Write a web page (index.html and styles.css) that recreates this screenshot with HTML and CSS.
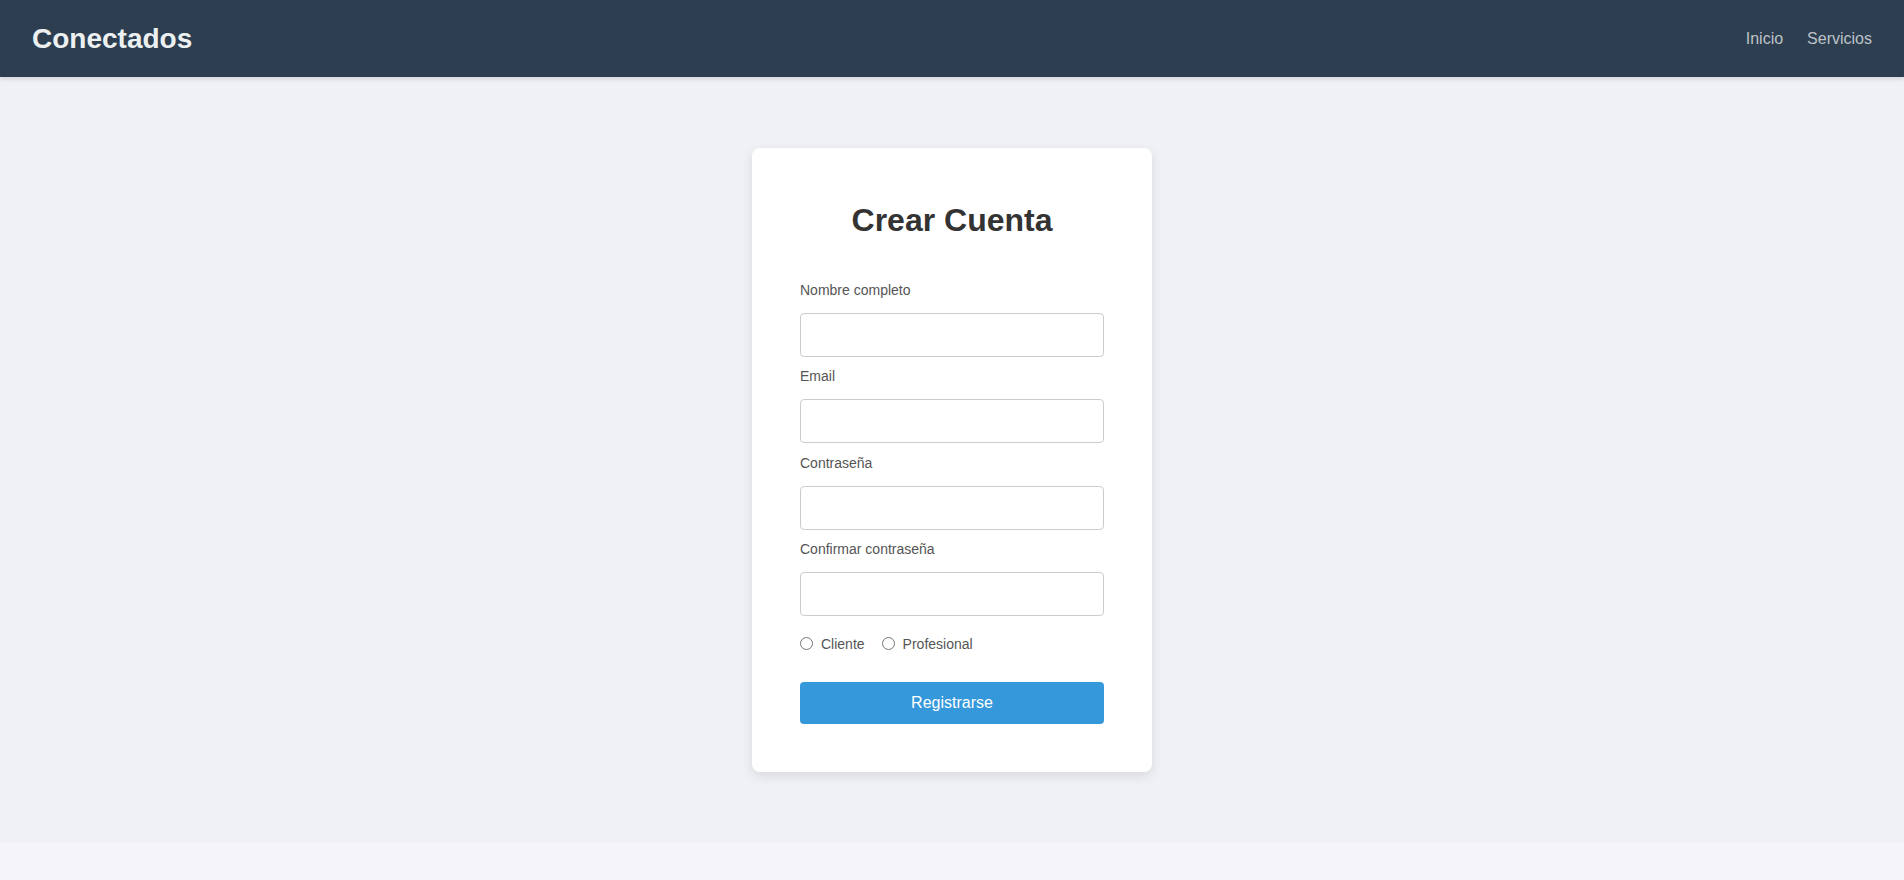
FILE: index.html
```html
<!DOCTYPE html>
<html lang="es">
<head>
<meta charset="utf-8">
<title>Conectados - Crear Cuenta</title>
<link rel="stylesheet" href="styles.css">
</head>
<body>
<header class="topbar">
  <div class="logo">Conectados</div>
  <nav class="nav">
    <a href="#" class="nav-link">Inicio</a>
    <a href="#" class="nav-link">Servicios</a>
  </nav>
</header>
<main class="main">
  <form class="card">
    <h2 class="card-title">Crear Cuenta</h2>
    <label class="field-label" for="nombre">Nombre completo</label>
    <input class="field-input" id="nombre" type="text">
    <label class="field-label" for="email">Email</label>
    <input class="field-input" id="email" type="email">
    <label class="field-label" for="pass">Contraseña</label>
    <input class="field-input" id="pass" type="password">
    <label class="field-label" for="pass2">Confirmar contraseña</label>
    <input class="field-input last" id="pass2" type="password">
    <div class="roles">
      <label class="role"><input type="radio" name="rol" class="role-radio"> Cliente</label>
      <label class="role"><input type="radio" name="rol" class="role-radio"> Profesional</label>
    </div>
    <button type="button" class="submit">Registrarse</button>
  </form>
</main>
</body>
</html>
```
FILE: styles.css
```css
* { box-sizing: border-box; }
html, body { margin: 0; padding: 0; }
body {
  font-family: "Liberation Sans", Arial, sans-serif;
  background: #f4f4f9;
  color: #333;
}
.topbar {
  height: 77px;
  background: #2c3e50;
  padding: 0 32px;
  display: flex;
  align-items: center;
  justify-content: space-between;
  box-shadow: 0 2px 5px rgba(0,0,0,0.12);
  position: relative;
  z-index: 1;
}
.logo {
  font-size: 28px;
  font-weight: bold;
  color: #ecf0f1;
}
.nav {
  display: flex;
  gap: 24px;
}
.nav-link {
  color: #bdc3c7;
  text-decoration: none;
  font-size: 16px;
}
.main {
  background: #f0f1f5;
  padding: 71px 0 71px;
  display: flex;
  justify-content: center;
}
.card {
  width: 400px;
  background: #fff;
  border-radius: 8px;
  padding: 48px;
  box-shadow: 0 4px 12px rgba(0,0,0,0.1);
  display: flex;
  flex-direction: column;
}
.card-title {
  margin: 6px 0 43px;
  font-size: 32px;
  line-height: 37px;
  text-align: center;
  color: #333;
}
.field-label {
  display: block;
  font-size: 14px;
  line-height: 16px;
  color: #555;
  margin-bottom: 15px;
}
.field-input {
  display: block;
  width: 100%;
  height: 44px;
  border: 1px solid #ccc;
  border-radius: 4px;
  padding: 0 12px;
  font-size: 16px;
  font-family: inherit;
  margin: 0 0 11.33px;
  background: #fff;
}
.field-input.last { margin-bottom: 20px; }
.roles {
  display: flex;
  gap: 17px;
  height: 16px;
  align-items: center;
}
.role {
  display: inline-flex;
  align-items: center;
  gap: 8px;
  font-size: 14px;
  line-height: 16px;
  color: #555;
}
.role-radio {
  margin: 0;
  width: 13px;
  height: 13px;
}
.submit {
  margin-top: 30px;
  height: 42px;
  width: 100%;
  background: #3498db;
  color: #fff;
  border: none;
  border-radius: 4px;
  font-size: 16px;
  font-family: inherit;
  cursor: pointer;
}
```
